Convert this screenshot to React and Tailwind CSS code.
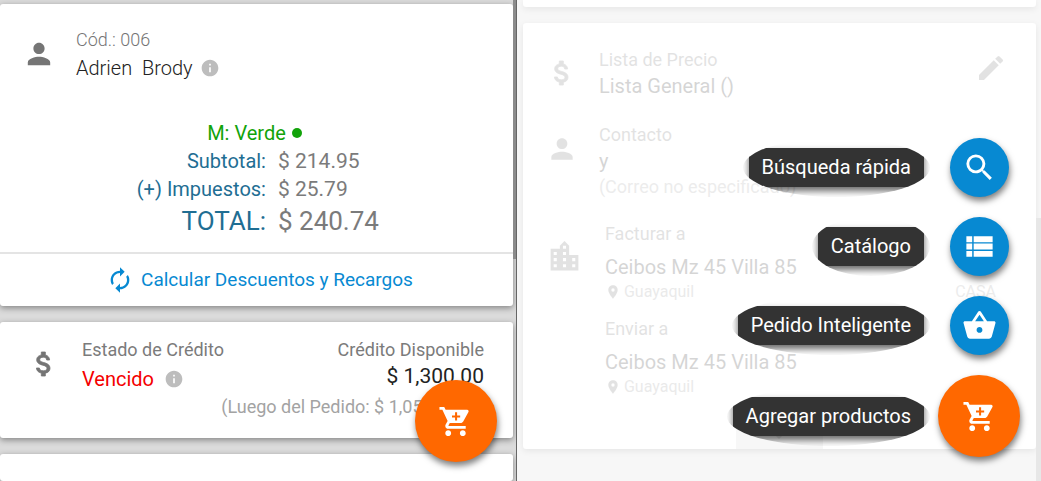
import React from "react";
import {
  MdPerson,
  MdInfo,
  MdAutorenew,
  MdSearch,
  MdViewList,
  MdShoppingBasket,
  MdEdit,
  MdLocationCity,
  MdPlace,
  MdKeyboardArrowDown,
} from "react-icons/md";

function CartPlusIcon() {
  return (
    <svg viewBox="0 0 24 24" className="size-[35px]" aria-hidden="true">
      <path
        fill="#fff"
        d="M7 18c-1.1 0-1.99.9-1.99 2S5.9 22 7 22s2-.9 2-2-.9-2-2-2zM1 2v2h2l3.6 7.59-1.35 2.45c-.16.28-.25.61-.25.96 0 1.1.9 2 2 2h12v-2H7.42c-.14 0-.25-.11-.25-.25l.03-.12.9-1.63h7.45c.75 0 1.41-.41 1.75-1.03l3.58-6.49A1.003 1.003 0 0 0 20 4H5.21l-.94-2H1zm16 16c-1.1 0-1.99.9-1.99 2s.89 2 1.99 2 2-.9 2-2-.9-2-2-2z"
      />
      <path fill="#ff6800" d="M11.700 5.700h1.400v2.100h2.100v1.400h-2.100v2.100h-1.400V9.200H9.600V7.800h2.100z" />
    </svg>
  );
}

function DollarIcon({ className }) {
  return (
    <svg
      viewBox="0 0 24 24"
      className={className}
      fill="currentColor"
      stroke="currentColor"
      strokeWidth="0.6"
      aria-hidden="true"
    >
      <path d="M11.8 10.9c-2.27-.59-3-1.2-3-2.15 0-1.09 1.01-1.85 2.7-1.85 1.78 0 2.44.85 2.5 2.1h2.21c-.07-1.72-1.12-3.3-3.21-3.81V3h-3v2.16c-1.94.42-3.5 1.68-3.5 3.61 0 2.31 1.91 3.46 4.7 4.13 2.5.6 3 1.48 3 2.41 0 .69-.49 1.79-2.7 1.79-2.06 0-2.87-.92-2.98-2.1h-2.2c.12 2.19 1.76 3.42 3.68 3.83V21h3v-2.150c1.95-.37 3.500-1.500 3.500-3.550 0-2.840-2.430-3.810-4.700-4.400z" />
    </svg>
  );
}

function Card({ className = "", children }) {
  return (
    <section className={"rounded-[3px] bg-white shadow-[0_2px_6px_rgba(0,0,0,0.4)] " + className}>
      {children}
    </section>
  );
}

function CartButton({ id, label }) {
  return (
    <button
      id={id}
      type="button"
      aria-label={label}
      className="flex size-[82px] items-center justify-center rounded-full bg-[#ff6800] shadow-[1px_4px_6px_rgba(0,0,0,0.5)]"
    >
      <CartPlusIcon />
    </button>
  );
}

function AmountRow({ label, value }) {
  return (
    <div className="grid grid-cols-[266fr_235fr] gap-x-3 leading-7">
      <dt className="text-right text-xl leading-7 text-[#1f6e93]">{label}</dt>
      <dd className="text-[21px] text-[#7b7b7b]">{value}</dd>
    </div>
  );
}

function OrderPanel() {
  return (
    <div className="relative flex w-[49.66%] shrink-0 flex-col gap-4 overflow-hidden border-r border-[#666] bg-[#dbdbdb] pt-1 pr-[3px]">
      <Card>
        <div className="flex items-center pt-[22px] pl-[25px]">
          <MdPerson className="mr-[23px] size-7 scale-120 text-[#757575]" />
          <div>
            <p className="text-lg leading-7 font-light text-[#757575]">Cód.: 006</p>
            <p className="flex items-center gap-[7px] text-xl leading-7 font-light text-[#222]">
              <span className="whitespace-pre">Adrien  Brody</span>
              <MdInfo className="size-5 text-[#bdbdbd]" />
            </p>
          </div>
        </div>
        <p className="mt-[37px] flex items-center justify-center gap-[6px] pr-1 text-xl leading-7 text-[#12a30a]">
          M: Verde
          <span className="size-[10px] rounded-full bg-[#12a30a]" />
        </p>
        <dl className="pb-[13px]">
          <AmountRow label="Subtotal:" value="$ 214.95" />
          <AmountRow label="(+) Impuestos:" value="$ 25.79" />
          <div className="grid grid-cols-[266fr_235fr] gap-x-3 text-[26px] leading-9">
            <dt className="text-right text-[#1f6e93]">TOTAL:</dt>
            <dd className="text-[#7b7b7b]">$ 240.74</dd>
          </div>
        </dl>
        <button
          type="button"
          className="flex h-[54px] w-full items-center justify-center gap-[7px] border-t-2 border-[#e4e4e4] pl-[6px] text-[19px] text-[#0789d2]"
        >
          <MdAutorenew className="size-7" />
          Calcular Descuentos y Recargos
        </button>
      </Card>

      <Card className="flex items-start pt-[14px] pr-[29px] pb-[15px] pl-[28px]">
        <DollarIcon className="mt-3 mr-[22px] size-8 shrink-0 text-[#757575]" />
        <div className="grow whitespace-nowrap">
          <p className="text-lg leading-7 text-[#7b7b7b]">Estado de Crédito</p>
          <p className="flex items-center gap-[10px] text-xl leading-[30px] text-[#f40000]">
            Vencido
            <MdInfo className="size-5 text-[#bdbdbd]" />
          </p>
        </div>
        <div className="flex w-0 flex-col items-end whitespace-nowrap">
          <p className="text-lg leading-7 text-[#7b7b7b]">Crédito Disponible</p>
          <p className="text-[21px] leading-6 text-[#222]">$ 1,300.00</p>
          <p className="mt-[3px] pr-5 text-lg leading-8 text-[#a3a3a3]">
            (Luego del Pedido: $ 1,059.26)
          </p>
        </div>
      </Card>

      <Card className="grow" />

      <div className="absolute top-0 right-0 h-[259px] w-[3px] bg-[#8b8b8b]" />
      <div className="absolute right-[19px] bottom-[19px]">
        <CartButton label="Acciones del pedido" />
      </div>
    </div>
  );
}

function Address({ title }) {
  return (
    <div>
      <p className="text-lg leading-8 text-[#757575]">{title}</p>
      <p className="text-xl leading-[34px] text-[#333]">Ceibos Mz 45 Villa 85</p>
      <p className="flex items-center gap-[3px] text-base leading-4 text-[#999]">
        <MdPlace className="size-4 text-[#757575]" />
        Guayaquil
      </p>
    </div>
  );
}

function FadedDetails() {
  return (
    <div className="flex min-h-full flex-col gap-4 bg-[#dbdbdb] pr-[5px] pl-[6px] opacity-20">
      <Card className="h-[7px] rounded-t-none" />
      <Card className="relative flex h-[426px] flex-col pl-[23px]">
        <div className="flex h-[75px] items-center pt-[24px]">
          <DollarIcon className="mr-[21px] size-8 text-[#757575]" />
          <div className="grow">
            <p className="text-lg leading-[26px] text-[#757575]">Lista de Precio</p>
            <p className="text-xl leading-[26px] text-[#333]">Lista General ()</p>
          </div>
          <button type="button" aria-label="Editar" className="mr-[29px] self-start">
            <MdEdit className="mt-[5px] size-8 text-[#757575]" />
          </button>
        </div>
        <div className="flex items-start pt-6">
          <MdPerson className="mt-[11px] mr-[21px] size-8 text-[#757575]" />
          <div>
            <p className="text-lg leading-[26px] text-[#757575]">Contacto</p>
            <p className="text-xl leading-[26px] text-[#333]">y</p>
            <p className="text-lg leading-[26px] text-[#a3a3a3]">(Correo no especificado)</p>
          </div>
        </div>
        <div className="flex items-start pt-[18px]">
          <MdLocationCity className="mt-[20px] mr-[22px] size-[37px] shrink-0 text-[#757575]" />
          <div className="flex grow flex-col gap-[13px]">
            <Address title="Facturar a" />
            <Address title="Enviar a" />
          </div>
          <span className="mt-[68px] mr-[40px] text-base leading-3 text-[#a3a3a3]">CASA</span>
        </div>
        <div className="absolute bottom-0 left-[213px] flex h-7 w-[87px] items-center justify-center bg-[#dbdbdb]">
          <MdKeyboardArrowDown className="size-6 text-[#757575]" />
        </div>
      </Card>
    </div>
  );
}

function ActionLabel({ htmlFor, children }) {
  return (
    <label htmlFor={htmlFor} className="block overflow-hidden rounded-[50%] px-[6px] py-[10px]">
      <span className="block bg-[#333] px-[13px] text-xl leading-[39px] text-white shadow-[0_4px_7px_rgba(0,0,0,0.6)]">
        {children}
      </span>
    </label>
  );
}

function Action({ id, label, Icon }) {
  return (
    <div className="flex items-center gap-5 pr-[11px]">
      <ActionLabel htmlFor={id}>{label}</ActionLabel>
      <button
        id={id}
        type="button"
        className="flex size-[59px] items-center justify-center rounded-full bg-[#0789d2] shadow-[1px_4px_6px_rgba(0,0,0,0.5)]"
      >
        <Icon className="size-[35px] text-white" />
      </button>
    </div>
  );
}

function ActionsPanel() {
  return (
    <div className="relative min-w-0 grow overflow-hidden bg-white">
      <FadedDetails />
      <div className="absolute right-0 bottom-0 h-[263px] w-[5px] bg-[#e7e7e7]" />
      <div className="absolute right-[21px] bottom-6 flex flex-col items-end gap-5">
        <Action id="busqueda" label="Búsqueda rápida" Icon={MdSearch} />
        <Action id="catalogo" label="Catálogo" Icon={MdViewList} />
        <Action id="pedido" label="Pedido Inteligente" Icon={MdShoppingBasket} />
        <div className="flex items-center gap-2">
          <ActionLabel htmlFor="agregar">Agregar productos</ActionLabel>
          <CartButton id="agregar" label="Agregar productos" />
        </div>
      </div>
    </div>
  );
}

export default function App() {
  return (
    <main className="flex h-screen overflow-hidden font-['Roboto',sans-serif]">
      <OrderPanel />
      <ActionsPanel />
    </main>
  );
}
